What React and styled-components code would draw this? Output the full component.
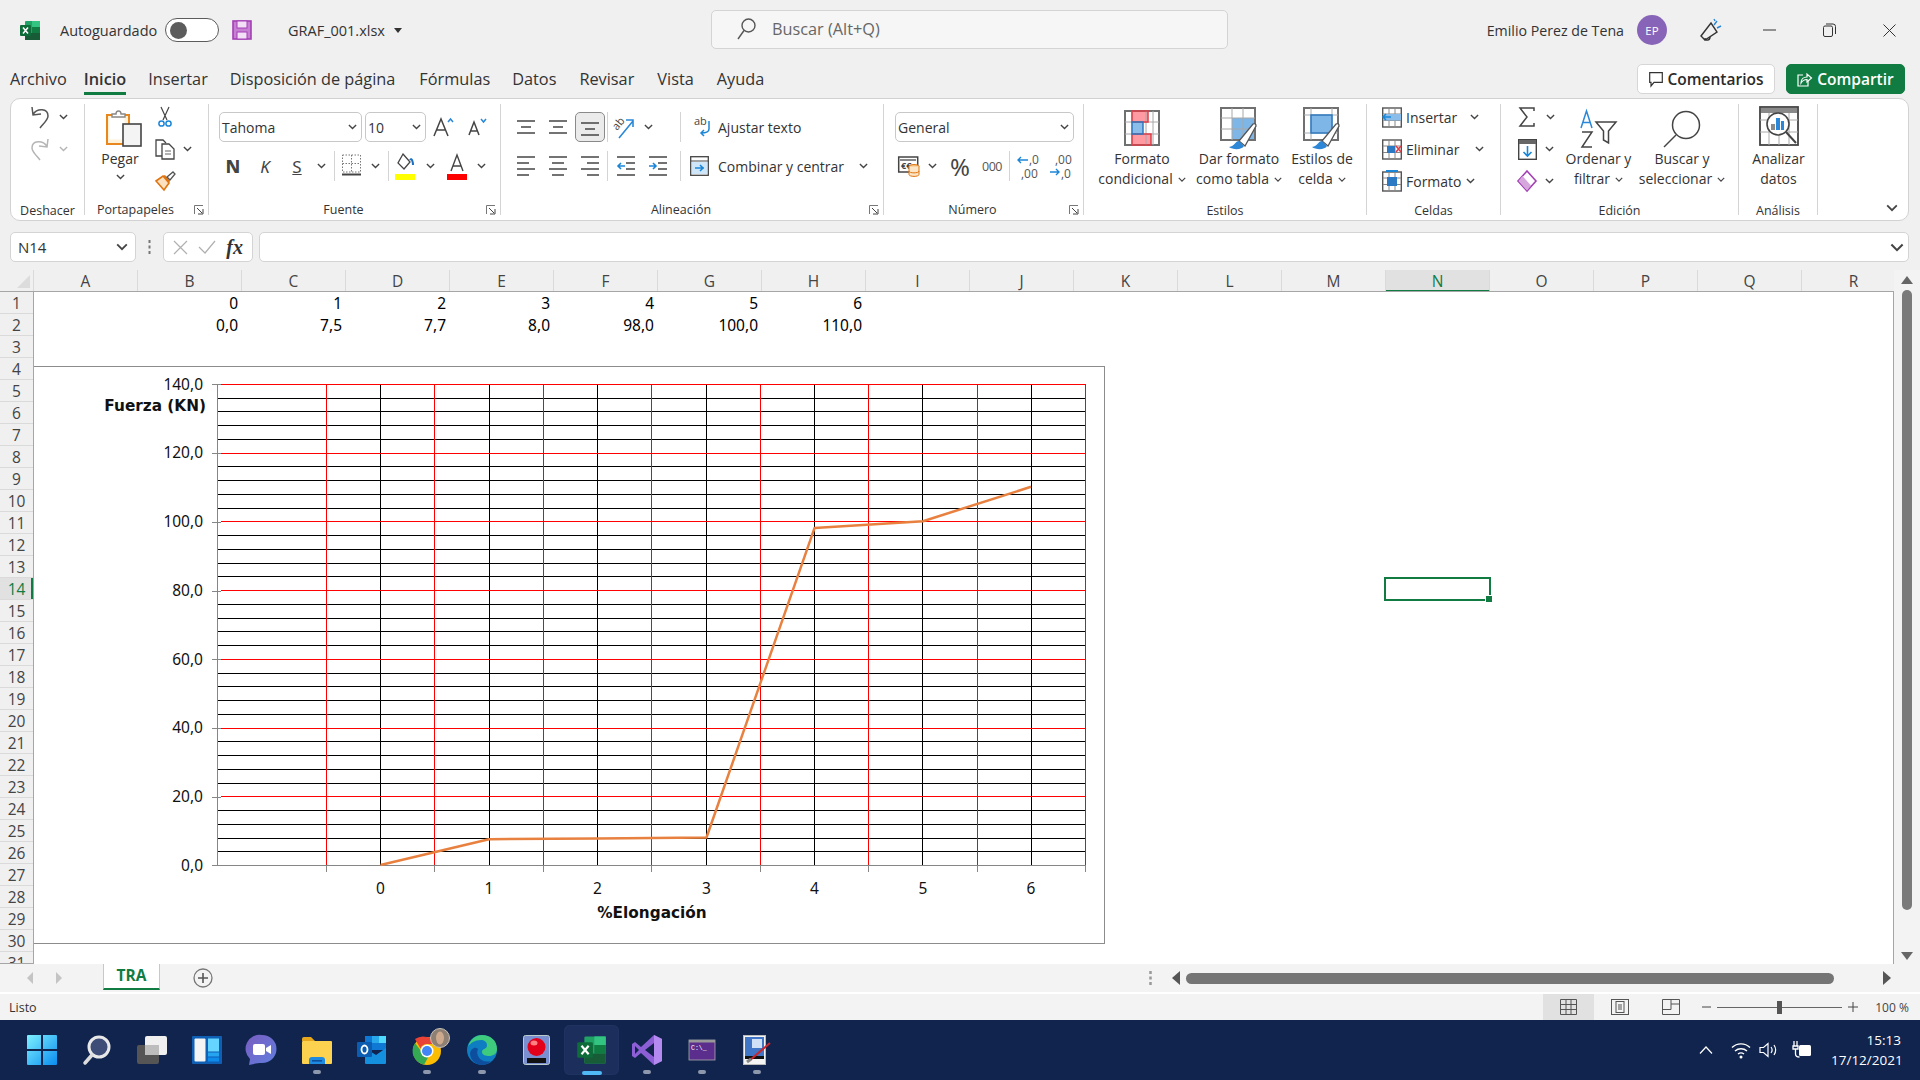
import React from "react";
import styled, { createGlobalStyle } from "styled-components";

const Global = createGlobalStyle`
  html, body { margin: 0; padding: 0; background: #f0f0f0; }
  * { box-sizing: border-box; }
`;
const UI = `"Open Sans", "Noto Sans", sans-serif`;
const Page = styled.div`
  width: 1920px; height: 1080px; overflow: hidden; background: #f0f0f0;
  display: flex; flex-direction: column; font-family: ${UI}; color: #2b2b2b; font-size: 14px;
`;
const Svg = styled.svg`display: block; flex: none; overflow: visible;`;

/* ---------- title bar ---------- */
const TitleBar = styled.header`height: 60px; flex: none; display: grid; grid-template-columns: 711px 517px 1fr; align-items: center;`;
const TitleLeft = styled.div`display: flex; align-items: center; padding-left: 20px;`;
const AutoLabel = styled.span`margin-left: 20px; width: 97px; font-size: 14.5px; white-space: nowrap; color: #333;`;
const Toggle = styled.span`
  margin-left: 8px; width: 54px; height: 24px; border: 1px solid #5c5c5c; border-radius: 12px; background: #fff;
  display: flex; align-items: center; padding-left: 4px;
  &::before { content: ""; width: 17px; height: 17px; border-radius: 50%; background: #5c5c5c; }
`;
const SaveWrap = styled.span`margin-left: 13px;`;
const FileName = styled.span`margin-left: 36px; font-size: 14.5px; white-space: nowrap; color: #333;`;
const Caret = styled.span`margin-left: 9px; border: 4px solid transparent; border-top: 5px solid #333; border-bottom: 0;`;
const SearchBox = styled.div`
  height: 39px; margin-top: -1px; background: #f6f6f6; border: 1px solid #d4d4d4; border-radius: 5px;
  display: flex; align-items: center; padding: 0 0 2px 25px; gap: 16px; color: #666; font-size: 16.3px;
`;
const TitleRight = styled.div`display: flex; align-items: center; justify-content: flex-end; padding-right: 1px;`;
const UserName = styled.span`font-size: 14.2px; color: #333; white-space: nowrap;`;
const Avatar = styled.span`
  margin-left: 13px; width: 30px; height: 30px; border-radius: 50%; background: #8764b8; color: #fff;
  display: flex; align-items: center; justify-content: center; font-size: 11.5px;
`;
const Feedback = styled.span`margin: 0 17px 0 33px;`;
const WinBtn = styled.span`width: 60px; display: flex; justify-content: center;`;

/* ---------- tabs ---------- */
const TabsRow = styled.nav`height: 38px; flex: none; display: flex; align-items: flex-start; padding: 4px 15px 0 0; position: relative;`;
const Tab = styled.span`
  margin-left: ${p => p.$ml}px; height: 30px; line-height: 30px; font-size: 16.3px; white-space: nowrap; color: #333; position: relative;
  font-weight: ${p => p.$on ? 600 : 400};
  ${p => p.$on && `&::after { content: ""; position: absolute; left: 0; right: 0; bottom: -1px; height: 3px; background: #107c41; }`}
`;
const TabSpacer = styled.span`flex: 1;`;
const CommentBtn = styled.span`
  width: 138px; height: 30px; background: #fff; border: 1px solid #d6d6d6; border-radius: 5px; font-weight: 600; font-size: 15.5px;
  display: flex; align-items: center; justify-content: center; gap: 5px; white-space: nowrap;
`;
const ShareBtn = styled(CommentBtn)`width: 119px; margin-left: 11px; background: #107c41; border-color: #107c41; color: #fff;`;

/* ---------- ribbon ---------- */
const Ribbon = styled.section`
  margin: 0 11px 0 10px; height: 123px; flex: none; background: #fff; border: 1px solid #d2d2d2; border-radius: 10px;
  padding-top: 5px; display: flex; position: relative;
`;
const Group = styled.div`
  width: ${p => p.$w}px; flex: none; height: 111px; display: flex; flex-direction: column;
  border-right: 1px solid #d4d4d4; position: relative;
`;
const Body = styled.div`
  height: 96px; flex: none; display: flex; flex-direction: ${p => p.$col ? "column" : "row"};
  padding: ${p => p.$pt || 0}px 0 0 ${p => p.$pl || 0}px;
`;
const GroupLabel = styled.div`
  height: 15px; line-height: ${p => p.$launch ? 20 : 21}px; text-align: center; font-size: 12.5px; color: #333; white-space: nowrap;
  padding-right: ${p => p.$launch ? 22 : 0}px;
`;
const Launcher = styled.span`position: absolute; right: 4px; bottom: 0;`;
const Stack = styled.div`display: flex; flex-direction: column; gap: 6px;`;
const Row = styled.div`display: flex; align-items: center; height: ${p => p.$h || 26}px; margin-top: ${p => p.$mt || 0}px;`;
const Slot = styled.span`
  width: ${p => p.$w}px; flex: none; display: flex; align-items: center; justify-content: center;
  height: ${p => p.$h ? p.$h + "px" : "auto"};
  margin-left: ${p => p.$ml || 0}px;
`;
const Pressed = styled(Slot)`height: 30px; background: #ebebeb; border: 1px solid #8a8a8a; border-radius: 5px;`;
const VSep = styled.span`width: 1px; height: 30px; background: #d4d4d4; flex: none; margin-left: ${p => p.$ml || 0}px;`;
const RowText = styled.span`width: ${p => p.$w}px; margin-left: ${p => p.$ml || 0}px; flex: none; font-size: 14px; white-space: nowrap; color: #333;`;
const Big = styled.div`width: ${p => p.$w}px; flex: none; display: flex; flex-direction: column; align-items: center; padding-top: 4px;`;
const BigIcon = styled.div`
  height: ${p => p.$h || 41}px; display: flex; align-items: center; justify-content: center;
  margin: ${p => p.$up ? -p.$up : 0}px 0 ${p => p.$up || 0}px ${p => p.$shift || 0}px;
`;
const BigLine = styled.div`height: 20px; line-height: 20px; font-size: 14px; white-space: nowrap; display: flex; align-items: center; gap: 5px; color: #333; margin-top: ${p => p.$mt || 0}px;`;
const Select = styled.div`
  width: ${p => p.$w}px; height: 30px; margin-left: ${p => p.$ml || 0}px; flex: none; background: #fff; border: 1px solid #c8c8c8; border-radius: 5px;
  display: flex; align-items: center; justify-content: space-between; padding: 0 4px 0 2px; font-size: 14px; color: #333;
`;
const Letter = styled.span`font-family: "Noto Sans", sans-serif; font-size: ${p => p.$s || 16}px; font-weight: ${p => p.$b ? 800 : 400}; font-style: ${p => p.$i ? "italic" : "normal"}; text-decoration: ${p => p.$u ? "underline" : "none"}; color: #444;`;
const TinyNum = styled.span`font-size: 12.5px; color: #555; letter-spacing: -0.5px;`;
const CollapseBtn = styled.span`position: absolute; right: 10px; bottom: 9px;`;

/* ---------- formula bar ---------- */
const FormulaRow = styled.div`height: 30px; margin: 11px 0 8px; flex: none; display: flex; padding: 0 11px 0 10px;`;
const FieldBox = styled.div`background: #fff; border: 1px solid #d4d4d4; border-radius: 5px; display: flex; align-items: center;`;
const NameBox = styled(FieldBox)`width: 126px; justify-content: space-between; padding: 0 7px; font-size: 15px; color: #333;`;
const Dots = styled.span`width: 27px; display: flex; align-items: center; justify-content: center;`;
const FxBox = styled(FieldBox)`width: 90px; justify-content: space-around; padding: 0 4px;`;
const Fx = styled.span`font-family: "Liberation Serif", serif; font-style: italic; font-weight: 700; font-size: 20px; color: #333;`;
const FormulaInput = styled(FieldBox)`flex: 1; margin-left: 6px; justify-content: flex-end; padding-right: 4px;`;

/* ---------- sheet ---------- */
const SheetRow = styled.div`height: 694px; flex: none; display: flex;`;
const SheetMain = styled.div`width: 1894px; display: flex; flex-direction: column;`;
const ColHeads = styled.div`height: 22px; flex: none; display: flex; border-bottom: 1px solid #a6a6a6; overflow: hidden;`;
const Corner = styled.div`width: 34px; flex: none; display: flex; align-items: flex-end; justify-content: flex-end; padding: 0 3px 3px 0; border-right: 1px solid #dadada;`;
const ColHead = styled.div`
  width: 104px; flex: none; text-align: center; line-height: 22px; font-size: 15.5px; color: ${p => p.$on ? "#107c41" : "#444"};
  border-right: 1px solid #dadada; height: 22px;
  background: ${p => p.$on ? "#e1e1e1" : "transparent"}; ${p => p.$on && "border-bottom: 2px solid #107c41;"}
`;
const SheetBody = styled.div`height: 672px; display: flex;`;
const RowHeads = styled.div`width: 34px; flex: none; overflow: hidden; border-right: 1px solid #a6a6a6;`;
const RowHead = styled.div`
  height: 22px; line-height: 22px; text-align: center; font-size: 15.5px; color: ${p => p.$on ? "#107c41" : "#444"};
  border-bottom: 1px solid #dadada; background: ${p => p.$on ? "#e1e1e1" : "transparent"};
  ${p => p.$on && "box-shadow: inset -2px 0 0 #107c41;"}
`;
const GridArea = styled.div`flex: 1; background: #fff; position: relative; overflow: hidden; border-right: 1px solid #a6a6a6;`;
const DataRow = styled.div`display: grid; grid-template-columns: repeat(18, 104px); height: 22px;`;
const Cell = styled.div`font-family: "Noto Sans", sans-serif; font-size: 15.5px; line-height: 22px; text-align: right; padding-right: 4px; color: #000;`;
const ChartFrame = styled.div`position: absolute; left: -1px; top: 74px; width: 1072px; height: 578px;`;
const Selection = styled.div`
  position: absolute; left: 1350px; top: 285px; width: 107px; height: 24px; border: 2px solid #107c41;
  &::after { content: ""; position: absolute; right: -4px; bottom: -4px; width: 6px; height: 6px; background: #107c41; border: 1px solid #fff; }
`;
const ChartText = styled.text`
  font-family: ${p => p.$b ? `"DejaVu Sans", sans-serif` : `"Noto Sans", sans-serif`};
  font-size: ${p => p.$b ? 15.3 : 15.5}px; fill: #111; font-weight: ${p => p.$b ? 700 : 400};
`;
const VScroll = styled.div`width: 26px; flex: none; background: #f3f3f3; display: flex; flex-direction: column; align-items: center; padding: 6px 0 0 0; position: relative;`;
const VThumb = styled.div`width: 10px; height: 620px; margin-top: 6px; background: #7a7a7a; border-radius: 5px;`;
const VDown = styled.span`margin-top: auto; margin-bottom: 4px;`;

/* ---------- sheet tabs ---------- */
const SheetBar = styled.div`height: 29px; flex: none; display: flex; align-items: center; background: #f3f3f3; border-top: 1px solid #a6a6a6; margin-top: -1px;`;
const SheetTab = styled.span`
  width: 57px; height: 26px; margin: -3px 0 0 41px; background: #fff; border: 1px solid #c8c8c8; border-top: 0; border-bottom: 2px solid #107c41;
  text-align: center; line-height: 22px; font-weight: 700; font-size: 15.5px; color: #107c41; flex: none;
`;
const AddSheet = styled.span`margin-left: 33px; flex: none;`;
const HScrollDots = styled.span`margin-left: 936px; flex: none;`;
const HThumb = styled.span`width: 648px; height: 11px; border-radius: 6px; background: #757575; margin-left: 6px; flex: none;`;
const Arrow = styled.span`margin-left: ${p => p.$ml}px; flex: none;`;

/* ---------- status ---------- */
const StatusBar = styled.div`height: 28px; flex: none; background: #f3f3f3; border-top: 2px solid #fff; display: flex; align-items: center; padding: 0 6px 0 9px; font-size: 12.5px; color: #333;`;
const StatusSpacer = styled.span`flex: 1;`;
const ViewBtn = styled.span`width: 51px; height: 26px; display: flex; align-items: center; justify-content: center; background: ${p => p.$on ? "#e1e1e1" : "transparent"};`;
const ZoomTrack = styled.span`width: 125px; height: 1px; margin: 0 6px 0 6px; background: #666; position: relative;
  &::after { content: ""; position: absolute; left: 60px; top: -6px; width: 5px; height: 13px; background: #555; }`;
const ZoomLabel = styled.span`width: 44px; margin-left: 12px; font-size: 12px; color: #444; text-align: center; white-space: nowrap;`;

/* ---------- taskbar ---------- */
const Taskbar = styled.footer`height: 60px; flex: none; background: #10244e; display: flex; align-items: center; padding-left: 14px; color: #fff;`;
const TaskItem = styled.span`
  width: 55px; height: 50px; flex: none; display: flex; align-items: center; justify-content: center; position: relative; border-radius: 6px;
  ${p => p.$active && "background: #1c2f5c; box-shadow: inset 0 0 0 1px #1f3363;"}
  ${p => p.$run && `&::after { content: ""; position: absolute; bottom: ${p.$active ? 0 : 1}px; left: 50%; transform: translateX(-50%); width: ${p.$active ? 20 : 8}px; height: 4px; border-radius: 2px; background: ${p.$active ? "#4fb8f5" : "#8d98ad"}; }`}
`;
const TrayWrap = styled.div`margin-left: auto; display: flex; align-items: center; padding-right: 19px;`;
const TraySlot = styled.span`width: ${p => p.$w}px; display: flex; justify-content: center;`;
const Clock = styled.div`margin-left: 10px; width: 70px; text-align: right; font-size: 13.5px; line-height: 20px; white-space: nowrap;`;

/* ---------- icons ---------- */
const Chev = ({ c = "#444", s = 9 }) => (
  <Svg width={s} height={s * 0.62} viewBox="0 0 10 6"><path d="M1 1l4 4 4-4" fill="none" stroke={c} strokeWidth="1.5" /></Svg>
);
const ExcelIcon = ({ s = 20 }) => (
  <Svg width={s} height={s + 1} viewBox="0 0 20 21">
    <rect x="5" y="1" width="15" height="19" rx="1" fill="#21a366" />
    <rect x="12" y="1" width="8" height="6" fill="#33c481" />
    <rect x="12" y="7" width="8" height="6" fill="#107c41" />
    <rect x="5" y="13" width="15" height="7" fill="#185c37" />
    <rect x="0" y="5" width="11" height="11" rx="1" fill="#0e6b3a" />
    <path d="M3 7.5l5 6M8 7.5l-5 6" stroke="#fff" strokeWidth="1.5" />
  </Svg>
);
const Undo = ({ c = "#555", flip }) => (
  <Svg width="20" height="24" viewBox="0 0 20 24" style={flip ? { transform: "scaleX(-1)" } : undefined}>
    <path d="M2 2l1 8 8-1M3 9.5C7 3 18 3 18 11c0 4-5 8-8 12" fill="none" stroke={c} strokeWidth="1.5" />
  </Svg>
);
const Clipboard = () => (
  <Svg width="36" height="38" viewBox="0 0 36 38">
    <rect x="1" y="6" width="22" height="29" fill="#fff2d9" stroke="#e8871e" strokeWidth="2" />
    <rect x="3.5" y="8.5" width="15" height="22" fill="#fff" />
    <path d="M6 8V5h4c0-4 5-4 5 0h4v3z" fill="#fff" stroke="#888" strokeWidth="1.4" />
    <rect x="17" y="15" width="18" height="22" fill="#f4f4f4" stroke="#444" strokeWidth="1.6" />
  </Svg>
);
const Scissors = () => (
  <Svg width="14" height="22" viewBox="0 0 14 22">
    <path d="M3 1l6 13M11 1L5 14" stroke="#444" strokeWidth="1.2" />
    <circle cx="3.5" cy="17.5" r="2.6" fill="none" stroke="#1b86d8" strokeWidth="1.5" />
    <circle cx="10.5" cy="17.5" r="2.6" fill="none" stroke="#1b86d8" strokeWidth="1.5" />
  </Svg>
);
const Copy = () => (
  <Svg width="20" height="21" viewBox="0 0 20 21">
    <path d="M8 17H1V1h7l3 3" fill="#fff" stroke="#444" strokeWidth="1.3" />
    <path d="M7 5h7l5 5v10H7z" fill="#fff" stroke="#444" strokeWidth="1.3" />
    <path d="M10 12h6M10 15h6" stroke="#666" />
  </Svg>
);
const Brush = () => (
  <Svg width="21" height="20" viewBox="0 0 21 20">
    <path d="M1 10l7-5 6 7-5 7z" fill="#fbe1c0" stroke="#e0740e" strokeWidth="1.6" />
    <path d="M8 5l2-1 5 6-1 2z" fill="#e0740e" />
    <path d="M12 6l6-5 2 2-5 6z" fill="#fff" stroke="#555" strokeWidth="1.3" />
  </Svg>
);
const Launch = () => (
  <Svg width="10" height="10" viewBox="0 0 10 10">
    <path d="M.5 9V.5H9" fill="none" stroke="#777" />
    <path d="M3 3l5 5M9 4v5H4" fill="none" stroke="#444" />
  </Svg>
);
const BigA = ({ up, s }) => (
  <Svg width="22" height="22" viewBox="0 0 22 22">
    <path d={s ? "M3 19L8 6l5 13M5 15h6" : "M1 20L8 3l7 17M4 14h8"} fill="none" stroke="#444" strokeWidth="1.5" />
    <path d={up ? "M15 6l2.5-3L20 6" : "M15 3l2.5 3L20 3"} fill="none" stroke="#2b88d8" strokeWidth="1.5" />
  </Svg>
);
const BorderIcon = () => (
  <Svg width="19" height="24" viewBox="0 0 19 24">
    <path d="M.5 1h18v17H.5zM9.5 1v17M.5 9.5h18" fill="none" stroke="#777" strokeWidth="1" strokeDasharray="1.5 1.5" />
    <path d="M0 20.5h19" stroke="#444" strokeWidth="2" />
  </Svg>
);
const FillIcon = () => (
  <Svg width="20" height="27" viewBox="0 0 20 27">
    <path d="M8 1l7 8-6 7-6-6z" fill="#fff" stroke="#444" strokeWidth="1.3" />
    <path d="M15 7c2-3 3 3 3 5" fill="none" stroke="#1b6fc2" strokeWidth="2" />
    <rect y="21" width="20" height="6" fill="#ffff00" />
  </Svg>
);
const ColorA = () => (
  <Svg width="20" height="27" viewBox="0 0 20 27">
    <path d="M4 18l6-16 6 16M6 13h8" fill="none" stroke="#444" strokeWidth="1.4" />
    <rect y="21" width="20" height="6" fill="#ff0000" />
  </Svg>
);
const Lines = ({ rows, w = 18, h = 20, c = "#444" }) => (
  <Svg width={w} height={h} viewBox={`0 0 ${w} ${h}`}>
    {rows.map(([a, b, y], i) => <path key={i} d={`M${a} ${y}H${b}`} stroke={c} strokeWidth="1.5" />)}
  </Svg>
);
const Orient = () => (
  <Svg width="22" height="24" viewBox="0 0 22 24">
    <text transform="translate(4 16) rotate(-50)" fontSize="11" fontFamily="Open Sans" fill="#444">ab</text>
    <path d="M6 23L20 6M13 5h7v7" fill="none" stroke="#2b88d8" strokeWidth="1.6" />
  </Svg>
);
const Indent = ({ inc }) => (
  <Svg width="18" height="22" viewBox="0 0 18 22">
    <path d="M0 2h18M9 8h9M9 14h9M0 20h18" stroke="#444" strokeWidth="1.5" />
    <path d={inc ? "M0 11h7M4 8l3 3-3 3" : "M8 11H1M4 8l-3 3 3 3"} fill="none" stroke="#1b86d8" strokeWidth="1.6" />
  </Svg>
);
const Wrap = () => (
  <Svg width="20" height="24" viewBox="-3 0 20 24">
    <text x="1" y="10" fontSize="11" fontFamily="Open Sans" fill="#444">ab</text>
    <path d="M16 6v8c0 3-3 4-8 4M11 15l-3 3 3 3" fill="none" stroke="#1b86d8" strokeWidth="1.5" />
  </Svg>
);
const Merge = () => (
  <Svg width="19" height="20" viewBox="0 0 19 20">
    <rect x=".7" y=".7" width="17.6" height="18.6" fill="#fff" stroke="#444" strokeWidth="1.3" />
    <path d="M1 5h17" stroke="#444" />
    <rect x="2" y="6" width="15" height="12" fill="#cfe6f8" />
    <path d="M5 12h9M10 9l3 3-3 3" fill="none" stroke="#1b86d8" strokeWidth="1.5" />
  </Svg>
);
const Currency = () => (
  <Svg width="22" height="24" viewBox="0 0 22 24">
    <rect x=".7" y="3" width="19" height="15" fill="#fff" stroke="#444" strokeWidth="1.5" />
    <rect x="2" y="5" width="16" height="2" fill="#888" />
    <text x="3" y="15" fontSize="9" fontWeight="700" fontFamily="Noto Sans" fill="#444">€€</text>
    <ellipse cx="16" cy="12.5" rx="5" ry="2" fill="#f7c27e" stroke="#e0740e" />
    <path d="M11 12.5v8c0 2.5 10 2.5 10 0v-8" fill="#fde6c8" stroke="#e0740e" />
    <path d="M11 17c0 2.5 10 2.5 10 0" fill="none" stroke="#e0740e" />
  </Svg>
);
const DecBtn = ({ inc }) => (
  <Svg width="20" height="26" viewBox="0 0 20 26">
    {inc ? <>
      <text x="5" y="11" fontSize="12" fontFamily="Open Sans" fill="#555">,00</text>
      <text x="11" y="25" fontSize="12" fontFamily="Open Sans" fill="#555">,0</text>
      <path d="M0 19h9M6 16l3 3-3 3" fill="none" stroke="#1b86d8" strokeWidth="1.4" />
    </> : <>
      <text x="12" y="11" fontSize="12" fontFamily="Open Sans" fill="#555">,0</text>
      <text x="4" y="25" fontSize="12" fontFamily="Open Sans" fill="#555">,00</text>
      <path d="M11 7H1M4 4L1 7l3 3" fill="none" stroke="#1b86d8" strokeWidth="1.4" />
    </>}
  </Svg>
);
const G = "#707070";
const CellGrid = ({ children, w = 36, h = 36, xs, ys }) => (
  <>
    {children}
    <rect x="1" y="1" width={w - 2} height={h - 2} fill="none" stroke={G} strokeWidth="2" />
    {xs.map(x => <path key={"x" + x} d={`M${x} 1V${h - 1}`} stroke="#a8a8a8" strokeWidth="1" />)}
    {ys.map(y => <path key={"y" + y} d={`M1 ${y}H${w - 1}`} stroke="#a8a8a8" strokeWidth="1" />)}
  </>
);
const PaintBrush = ({ x = 0, y = 0 }) => (
  <g transform={`translate(${x} ${y})`}>
    <path d="M13 14l14-17c2-1 3 0 3 2L19 19z" fill="#fff" stroke="#555" strokeWidth="1.3" />
    <path d="M13 14c-4 0-4 5-10 6 4 3 13 3 15-1z" fill="#2e86d6" />
  </g>
);
const CondIcon = () => (
  <Svg width="36" height="38" viewBox="0 0 36 38">
    <CellGrid h={36} xs={[8, 22, 29]} ys={[12, 24]}>
      <rect x="8" y="1" width="16" height="11" fill="#ff9aa2" />
      <rect x="8" y="12" width="11" height="12" fill="#8bbdea" />
      <rect x="8" y="24" width="19" height="11" fill="#ff9aa2" />
    </CellGrid>
    <rect x="8" y="1" width="16" height="11" fill="none" stroke="#e03c46" strokeWidth="1.5" />
    <rect x="8" y="24" width="19" height="11" fill="none" stroke="#e03c46" strokeWidth="1.5" />
    <rect x="8" y="12" width="11" height="12" fill="none" stroke="#2b79c2" strokeWidth="1.5" />
  </Svg>
);
const TableIcon = () => (
  <Svg width="38" height="44" viewBox="0 0 38 44">
    <CellGrid h={34} xs={[12, 23]} ys={[11, 22]}>
      <rect x="12" y="11" width="23" height="22" fill="#7fb6e8" />
    </CellGrid>
    <PaintBrush x="6" y="20" />
  </Svg>
);
const CellStyleIcon = () => (
  <Svg width="38" height="44" viewBox="0 0 38 44">
    <CellGrid h={34} xs={[8, 29]} ys={[8, 26]}>
      <rect x="8" y="8" width="21" height="18" fill="#7fb6e8" />
    </CellGrid>
    <rect x="8" y="8" width="21" height="18" fill="none" stroke="#2b79c2" strokeWidth="1.5" />
    <PaintBrush x="6" y="20" />
  </Svg>
);
const SmallCells = ({ children }) => (
  <Svg width="20" height="21" viewBox="0 0 20 21">
    <rect x=".7" y="1" width="18.6" height="19" fill="#fff" stroke="#555" strokeWidth="1.4" />
    <path d="M1 7h18M1 13.5h18M7 1v19M13 1v19" stroke="#888" />
    {children}
  </Svg>
);
const SumIcon = () => (
  <Svg width="16" height="20" viewBox="0 0 16 20"><path d="M15 4V1H1l7 9-7 9h14v-3" fill="none" stroke="#444" strokeWidth="1.5" /></Svg>
);
const FillDown = () => (
  <Svg width="19" height="21" viewBox="0 0 19 21">
    <rect x=".7" y=".7" width="17.6" height="19.6" fill="#fff" stroke="#444" strokeWidth="1.4" />
    <rect x="1" y="1" width="17" height="4" fill="#666" />
    <path d="M9.5 7v10M5.5 13l4 4 4-4" fill="none" stroke="#1b86d8" strokeWidth="1.6" />
  </Svg>
);
const Eraser = () => (
  <Svg width="20" height="22" viewBox="0 0 20 22">
    <path d="M10 1l9 10-9 10-9-10z" fill="#fff" stroke="#a33fb5" strokeWidth="1.6" />
    <path d="M5.5 6L1.5 11l8.5 9.5 4-5z" fill="#d5a7dd" />
  </Svg>
);
const SortIcon = () => (
  <Svg width="38" height="38" viewBox="0 0 38 38">
    <path d="M1 18L6.5 1 12 18M3 12.5h7" fill="none" stroke="#2b88d8" strokeWidth="1.5" />
    <path d="M2 22h10L2 37h10" fill="none" stroke="#444" strokeWidth="1.5" />
    <path d="M16 12h20l-7.5 9v12l-5-3v-9z" fill="#fff" stroke="#444" strokeWidth="1.5" />
  </Svg>
);
const FindIcon = () => (
  <Svg width="38" height="38" viewBox="0 0 38 38">
    <circle cx="23" cy="15" r="13.5" fill="#fff" stroke="#444" strokeWidth="1.5" />
    <path d="M13 25L1 37" stroke="#444" strokeWidth="1.5" />
  </Svg>
);
const AnalyzeIcon = () => (
  <Svg width="40" height="40" viewBox="0 0 40 40">
    <rect x="1" y="1" width="38" height="38" fill="#fff" stroke="#444" strokeWidth="1.8" />
    <rect x="2" y="2" width="36" height="5" fill="#8a8a8a" />
    <path d="M1 14h38M1 26h38M10 7v32M30 7v32M20 26v13" stroke="#aaa" />
    <circle cx="19" cy="18" r="11" fill="#fff" stroke="#444" strokeWidth="1.6" />
    <rect x="12" y="18" width="4" height="6" fill="#8a8a8a" />
    <rect x="17" y="12" width="4" height="12" fill="#2b88d8" />
    <rect x="22" y="15" width="3" height="9" fill="#2b88d8" />
    <path d="M27 26l10 11" stroke="#444" strokeWidth="2" />
  </Svg>
);

/* ---------- taskbar icons ---------- */
const WinLogo = () => (
  <Svg width="30" height="30" viewBox="0 0 30 30">
    <defs><linearGradient id="win" x1="0" y1="0" x2="1" y2="1"><stop offset="0" stopColor="#7ef0ff" /><stop offset="1" stopColor="#0a8df0" /></linearGradient></defs>
    <path d="M0 1a1 1 0 011-1h13v14H0zM16 0h13a1 1 0 011 1v13H16zM0 16h14v14H1a1 1 0 01-1-1zM16 16h14v13a1 1 0 01-1 1H16z" fill="url(#win)" />
  </Svg>
);
const SearchT = () => (
  <Svg width="28" height="30" viewBox="0 0 28 30">
    <circle cx="16" cy="12" r="10" fill="#3d4d78" stroke="#e8e8e8" strokeWidth="3" />
    <path d="M9 20L2 28" stroke="#ddd" strokeWidth="3.5" strokeLinecap="round" />
  </Svg>
);
const TaskView = () => (
  <Svg width="30" height="28" viewBox="0 0 30 28">
    <rect x="0" y="9" width="22" height="19" rx="2" fill="#555" />
    <rect x="8" y="0" width="22" height="19" rx="2" fill="#f0f0f0" />
    <rect x="8" y="9" width="14" height="10" fill="#bdbdbd" />
  </Svg>
);
const Widgets = () => (
  <Svg width="30" height="28" viewBox="0 0 30 28">
    <rect width="30" height="28" rx="1" fill="#0f5fb4" />
    <rect x="2.5" y="2.5" width="11" height="23" rx="1" fill="#f4f4f4" />
    <rect x="16" y="2.5" width="11" height="13" fill="#65d5ff" />
    <rect x="16" y="16.5" width="11" height="4" fill="#27a4f0" />
    <rect x="16" y="21.5" width="11" height="4" fill="#0d8aea" />
  </Svg>
);
const Teams = () => (
  <Svg width="30" height="30" viewBox="0 0 30 30">
    <defs><linearGradient id="tm" x1="0" y1="0" x2="1" y2="1"><stop offset="0" stopColor="#7a5cc0" /><stop offset="1" stopColor="#5f7fe0" /></linearGradient></defs>
    <path d="M15 0a14.5 14 0 110 28c-3 0-6 0-8 1l-5 1 1-6A14 14 0 0115 0z" fill="url(#tm)" />
    <rect x="6" y="9" width="12" height="11" rx="2" fill="#fff" />
    <path d="M19 13l5-3v9l-5-3z" fill="#fff" />
  </Svg>
);
const Folder = () => (
  <Svg width="30" height="27" viewBox="0 0 30 27">
    <path d="M0 2a2 2 0 012-2h7l4 4H0z" fill="#e8a81e" />
    <rect y="4" width="30" height="23" rx="1" fill="#fdd24f" />
    <path d="M7 23a3 3 0 013-3h10a3 3 0 013 3v4H7z" fill="#1f8be0" />
    <rect x="10" y="23" width="10" height="1.6" fill="#0c4f9c" />
  </Svg>
);
const Outlook = () => (
  <Svg width="30" height="28" viewBox="0 0 30 28">
    <rect x="8" y="0" width="21" height="14" fill="#0f78d4" />
    <rect x="15" y="0" width="7" height="7" fill="#28a8ea" />
    <rect x="22" y="0" width="7" height="7" fill="#50d9ff" />
    <path d="M8 12l11 7 10-7v15a1 1 0 01-1 1H9a1 1 0 01-1-1z" fill="#1490df" />
    <rect x="0" y="6" width="15" height="15" rx="1" fill="#0a5db0" />
    <ellipse cx="7.5" cy="13.5" rx="3" ry="4" fill="none" stroke="#fff" strokeWidth="1.8" />
  </Svg>
);
const Chrome = () => (
  <Svg width="38" height="38" viewBox="0 0 38 38" style={{ marginTop: -6, marginLeft: 8 }}>
    <circle cx="15" cy="23" r="14" fill="#fbbc04" />
    <path d="M15 9a14 14 0 0112.1 7H15a7 7 0 00-6.5 4.5L3 11a14 14 0 0112-2z" fill="#ea4335" />
    <path d="M3 15a14 14 0 009 21.7l6-10.7a7 7 0 01-9-3z" fill="#34a853" />
    <circle cx="15" cy="23" r="6.5" fill="#fff" />
    <circle cx="15" cy="23" r="5" fill="#4285f4" />
    <circle cx="28" cy="10" r="9.5" fill="#8f8074" stroke="#c9c2b8" strokeWidth="1" />
    <ellipse cx="28" cy="10" rx="4" ry="6.5" fill="#cda98d" />
  </Svg>
);
const Edge = () => (
  <Svg width="30" height="30" viewBox="0 0 30 30">
    <circle cx="15" cy="15" r="15" fill="#0f7dc2" />
    <path d="M1 12C3 4 9 0 15 0c8 0 15 5 15 14 0 5-4 7-8 7-3 0-7-1-7-4 0-4 5-2 5-7 0-3-3-5-6-5-6 0-11 3-13 7z" fill="#3ecb7e" />
    <path d="M11 14c-3 6 3 15 13 12-3 3-6 4-9 4C8 30 3 24 3 18c1-4 5-7 8-4z" fill="#0d4f9e" />
  </Svg>
);
const RedBall = () => (
  <Svg width="27" height="30" viewBox="0 0 27 30">
    <rect x=".5" y=".5" width="26" height="29" rx="2" fill="#7a8fd0" stroke="#bcc" />
    <circle cx="13.5" cy="12" r="9" fill="#e2001a" />
    <ellipse cx="11" cy="8" rx="3.5" ry="2.5" fill="#ff8080" />
    <rect x="4" y="23" width="19" height="5" fill="#111" />
  </Svg>
);
const VS = () => (
  <Svg width="30" height="30" viewBox="0 0 30 30">
    <path d="M22 0l8 4v22l-8 4-13-12-6 5-3-2V9l3-2 6 5z" fill="#8c5fd6" />
    <path d="M22 8v14l-9-7z" fill="#10244e" />
    <path d="M3 11v8l4-4z" fill="#10244e" />
    <path d="M22 0l8 4v22l-8 4z" fill="#b58af0" />
  </Svg>
);
const Cmd = () => (
  <Svg width="26" height="20" viewBox="0 0 26 20">
    <rect width="26" height="20" fill="#5b2d8c" stroke="#aaa" strokeWidth=".8" />
    <rect width="26" height="2.5" fill="#999" />
    <text x="2" y="10" fontSize="6.5" fill="#fff" fontFamily="Liberation Mono">C:\_</text>
  </Svg>
);
const PaintT = () => (
  <Svg width="28" height="30" viewBox="0 0 28 30">
    <rect x=".5" y=".5" width="22" height="29" fill="#f4f4f4" stroke="#bbb" />
    <rect x="2" y="2" width="19" height="19" fill="#3f74c6" />
    <rect x="9" y="4" width="10" height="9" fill="#cfe0f7" />
    <rect x="2" y="21" width="19" height="3" fill="#111" />
    <path d="M6 26L27 8" stroke="#c8262e" strokeWidth="2" />
    <path d="M4 27l4-3" stroke="#888" strokeWidth="3" />
  </Svg>
);

const COLS = "ABCDEFGHIJKLMNOPQR".split("");

const yVal = v => 865 - v * 3.4379;
const H_LINES = Array.from({ length: 36 }, (_, i) => i);
const RED_X = [326, 434, 543, 651, 760, 868, 977, 1085];
const BLACK_X = [380, 489, 597, 706, 814, 922, 1031];
const LABEL_X = [380.5, 489, 597.5, 706.5, 814.5, 923, 1031];
const SERIES = [0, 7.5, 7.7, 8, 98, 100, 110];

const Chart = () => (
  <Svg width="1072" height="578" viewBox="33 366 1072 578">
    <rect x="33.5" y="366.5" width="1071" height="577" fill="#fff" stroke="#8c8c8c" />
    <g shapeRendering="crispEdges">
      {H_LINES.filter(i => i % 5 !== 0).map(i => {
        const y = Math.round(865 - i * 13.75) + 0.5;
        return <path key={i} d={`M218 ${y}H1085`} stroke="#000" />;
      })}
      {BLACK_X.map(x => <path key={x} d={`M${x + 0.5} 384V865`} stroke="#000" />)}
      {RED_X.map(x => <path key={x} d={`M${x + 0.5} 384V865`} stroke="#f00" />)}
      {H_LINES.filter(i => i % 5 === 0 && i > 0).map(i => {
        const y = Math.round(865 - i * 13.75) + 0.5;
        return <path key={i} d={`M221 ${y}H1086`} stroke="#f00" />;
      })}
      <path d="M217.5 384V866M212 865.5H1086" stroke="#868686" />
      <path d="M212 384.500H221M212 453.500H221M212 522.500H221M212 591.500H221M212 659.500H221M212 728.500H221M212 797.500H221" stroke="#868686" />
      {RED_X.map(x => <path key={x} d={`M${x + 0.5} 865V872`} stroke="#868686" />)}
    </g>
    <polyline points={LABEL_X.map((x, i) => `${x},${yVal(SERIES[i]).toFixed(1)}`).join(" ")} fill="none" stroke="#e8803f" strokeWidth="2.5" strokeLinejoin="round" />
    {[0, 1, 2, 3, 4, 5, 6, 7].map(i => (
      <ChartText key={i} x="203" y={871 - i * 68.76} textAnchor="end">{(i * 20).toFixed(1).replace(".", ",")}</ChartText>
    ))}
    {LABEL_X.map((x, i) => <ChartText key={i} x={x} y="894" textAnchor="middle">{i}</ChartText>)}
    <ChartText $b x="206" y="411" textAnchor="end">Fuerza (KN)</ChartText>
    <ChartText $b x="652" y="918" textAnchor="middle">%Elongación</ChartText>
  </Svg>
);

export default function App() {
  return (
    <Page>
      <Global />
      <TitleBar>
        <TitleLeft>
          <ExcelIcon />
          <AutoLabel>Autoguardado</AutoLabel>
          <Toggle />
          <SaveWrap>
            <Svg width="20" height="20" viewBox="0 0 20 20">
              <rect x="1" y="1" width="18" height="18" fill="#c77fd3" stroke="#a33fb5" strokeWidth="1.6" />
              <rect x="5" y="1" width="10" height="7" fill="#f3dff6" stroke="#a33fb5" />
              <rect x="5" y="12" width="10" height="7" fill="#f3dff6" stroke="#a33fb5" />
            </Svg>
          </SaveWrap>
          <FileName>GRAF_001.xlsx</FileName>
          <Caret />
        </TitleLeft>
        <SearchBox>
          <Svg width="19" height="22" viewBox="0 0 19 22">
            <circle cx="11.5" cy="7.5" r="6.5" fill="none" stroke="#555" strokeWidth="1.4" />
            <path d="M7 12.5L1 21" stroke="#555" strokeWidth="1.4" />
          </Svg>
          Buscar (Alt+Q)
        </SearchBox>
        <TitleRight>
          <UserName>Emilio Perez de Tena</UserName>
          <Avatar>EP</Avatar>
          <Feedback>
            <Svg width="22" height="24" viewBox="0 0 22 24">
              <path d="M1 18L11 5l6 9L5 22z" fill="none" stroke="#333" strokeWidth="1.4" />
              <path d="M5 20c0 3 5 3 5-1" fill="none" stroke="#333" strokeWidth="1.4" />
              <path d="M14 7l3-4M17 10l4-2M14 1l1 2" stroke="#2b88d8" strokeWidth="1.4" />
            </Svg>
          </Feedback>
          <WinBtn><Svg width="13" height="2" viewBox="0 0 13 2"><path d="M0 1h13" stroke="#333" /></Svg></WinBtn>
          <WinBtn>
            <Svg width="13" height="14" viewBox="0 0 13 14">
              <rect x=".5" y="3" width="9" height="10.5" rx="1.5" fill="none" stroke="#333" />
              <path d="M3 1h7a2.5 2.5 0 012.5 2.5V11" fill="none" stroke="#333" />
            </Svg>
          </WinBtn>
          <WinBtn><Svg width="13" height="13" viewBox="0 0 13 13"><path d="M.5.5l12 12M12.5.5l-12 12" stroke="#333" /></Svg></WinBtn>
        </TitleRight>
      </TitleBar>

      <TabsRow>
        <Tab $ml={10}>Archivo</Tab>
        <Tab $ml={17} $on>Inicio</Tab>
        <Tab $ml={22}>Insertar</Tab>
        <Tab $ml={22}>Disposición de página</Tab>
        <Tab $ml={24}>Fórmulas</Tab>
        <Tab $ml={22}>Datos</Tab>
        <Tab $ml={23}>Revisar</Tab>
        <Tab $ml={23}>Vista</Tab>
        <Tab $ml={23}>Ayuda</Tab>
        <TabSpacer />
        <CommentBtn>
          <Svg width="14" height="15" viewBox="0 0 14 15"><path d="M.7.7h12.6v9.6H5L2 14v-3.7H.7z" fill="none" stroke="#333" strokeWidth="1.2" /></Svg>
          Comentarios
        </CommentBtn>
        <ShareBtn>
          <Svg width="15" height="15" viewBox="0 0 15 15">
            <path d="M6 3H1v11h10V9" fill="none" stroke="#fff" strokeWidth="1.2" />
            <path d="M4 11c0-4 3-6 6-6V2l4.500 4L10 10V7.500C8 7.500 5.500 8.500 4 11z" fill="none" stroke="#fff" strokeWidth="1.2" />
          </Svg>
          Compartir
        </ShareBtn>
      </TabsRow>

      <Ribbon>
        <Group $w={74}>
          <Body $col $pl={16}>
            <Stack>
              <Row><Slot $w={26}><Undo /></Slot><Slot $w={20}><Chev /></Slot></Row>
              <Row><Slot $w={26}><Undo c="#b5b5b5" flip /></Slot><Slot $w={20}><Chev c="#b5b5b5" /></Slot></Row>
            </Stack>
          </Body>
          <GroupLabel>Deshacer</GroupLabel>
        </Group>

        <Group $w={124}>
          <Body>
            <Big $w={70}>
              <BigIcon $h={39} $shift={8}><Clipboard /></BigIcon>
              <BigLine $mt={2}>Pegar</BigLine>
              <Slot $w={20} $h={16}><Chev /></Slot>
            </Big>
            <Stack>
              <Row><Slot $w={20}><Scissors /></Slot></Row>
              <Row><Slot $w={20}><Copy /></Slot><Slot $w={24}><Chev /></Slot></Row>
              <Row><Slot $w={20}><Brush /></Slot></Row>
            </Stack>
          </Body>
          <GroupLabel $launch>Portapapeles</GroupLabel>
          <Launcher><Launch /></Launcher>
        </Group>

        <Group $w={292}>
          <Body $col $pl={10} $pt={8}>
            <Row $h={30}>
              <Select $w={143}>Tahoma<Chev /></Select>
              <Select $w={61} $ml={3}>10<Chev /></Select>
              <Slot $w={22} $ml={7}><BigA up /></Slot>
              <Slot $w={22} $ml={11}><BigA s /></Slot>
            </Row>
            <Row $h={30} $mt={9}>
              <Slot $w={28}><Letter $b $s={18}>N</Letter></Slot>
              <Slot $w={36}><Letter $i $s={17}>K</Letter></Slot>
              <Slot $w={28}><Letter $u $s={17}>S</Letter></Slot>
              <Slot $w={20}><Chev /></Slot>
              <VSep $ml={3} />
              <Slot $w={32}><BorderIcon /></Slot>
              <Slot $w={16}><Chev /></Slot>
              <VSep $ml={5} />
              <Slot $w={32}><FillIcon /></Slot>
              <Slot $w={18}><Chev /></Slot>
              <Slot $w={36}><ColorA /></Slot>
              <Slot $w={12}><Chev /></Slot>
            </Row>
          </Body>
          <GroupLabel $launch>Fuente</GroupLabel>
          <Launcher><Launch /></Launcher>
        </Group>

        <Group $w={383}>
          <Body $col $pl={9} $pt={8}>
            <Row $h={30}>
              <Slot $w={32}><Lines rows={[[0, 18, 2], [4, 14, 8], [0, 18, 14]]} h={16} /></Slot>
              <Slot $w={32}><Lines rows={[[0, 18, 3], [4, 14, 9], [0, 18, 15]]} h={18} /></Slot>
              <Pressed $w={30} $ml={1}><Lines rows={[[0, 18, 6], [4, 14, 12], [0, 18, 18]]} /></Pressed>
              <VSep $ml={2} />
              <Slot $w={32}><Orient /></Slot>
              <Slot $w={16}><Chev /></Slot>
              <VSep $ml={24} />
              <Slot $w={37}><Wrap /></Slot>
              <RowText $w={120}>Ajustar texto</RowText>
            </Row>
            <Row $h={30} $mt={9}>
              <Slot $w={32}><Lines rows={[[0, 18, 2], [0, 12, 8], [0, 18, 14], [0, 12, 20]]} h={22} /></Slot>
              <Slot $w={32}><Lines rows={[[0, 18, 2], [3, 15, 8], [0, 18, 14], [3, 15, 20]]} h={22} /></Slot>
              <Slot $w={32}><Lines rows={[[0, 18, 2], [6, 18, 8], [0, 18, 14], [6, 18, 20]]} h={22} /></Slot>
              <VSep $ml={1} />
              <Slot $w={36}><Indent /></Slot>
              <Slot $w={28}><Indent inc /></Slot>
              <VSep $ml={8} />
              <Slot $w={37}><Merge /></Slot>
              <RowText $w={132}>Combinar y centrar</RowText>
              <Slot $w={26}><Chev /></Slot>
            </Row>
          </Body>
          <GroupLabel $launch>Alineación</GroupLabel>
          <Launcher><Launch /></Launcher>
        </Group>

        <Group $w={200}>
          <Body $col $pl={11} $pt={8}>
            <Row $h={30}><Select $w={179}>General<Chev /></Select></Row>
            <Row $h={30} $mt={9}>
              <Slot $w={28}><Currency /></Slot>
              <Slot $w={18}><Chev /></Slot>
              <Slot $w={38}><Letter $s={24}>%</Letter></Slot>
              <Slot $w={26}><TinyNum>000</TinyNum></Slot>
              <VSep $ml={4} />
              <Slot $w={34}><DecBtn /></Slot>
              <Slot $w={32}><DecBtn inc /></Slot>
            </Row>
          </Body>
          <GroupLabel $launch>Número</GroupLabel>
          <Launcher><Launch /></Launcher>
        </Group>

        <Group $w={283}>
          <Body>
            <Big $w={116}>
              <BigIcon><CondIcon /></BigIcon>
              <BigLine>Formato</BigLine>
              <BigLine>condicional <Chev s={8} /></BigLine>
            </Big>
            <Big $w={78}>
              <BigIcon><TableIcon /></BigIcon>
              <BigLine>Dar formato</BigLine>
              <BigLine>como tabla <Chev s={8} /></BigLine>
            </Big>
            <Big $w={88}>
              <BigIcon><CellStyleIcon /></BigIcon>
              <BigLine>Estilos de</BigLine>
              <BigLine>celda <Chev s={8} /></BigLine>
            </Big>
          </Body>
          <GroupLabel>Estilos</GroupLabel>
        </Group>

        <Group $w={134}>
          <Body $col $pl={15}>
            <Stack>
              <Row>
                <SmallCells><rect x="1" y="7" width="18" height="6.5" fill="#8bbdea" /><path d="M9 10H1M4 7l-3 3 3 3" fill="none" stroke="#1b86d8" strokeWidth="1.5" /></SmallCells>
                <RowText $w={60} $ml={4}>Insertar</RowText><Slot $w={16}><Chev /></Slot>
              </Row>
              <Row>
                <SmallCells><rect x="5" y="7" width="8" height="7" fill="#2b79c2" /><path d="M14 7l5 6M19 7l-5 6" stroke="#e03c46" strokeWidth="1.5" /></SmallCells>
                <RowText $w={65} $ml={4}>Eliminar</RowText><Slot $w={16}><Chev /></Slot>
              </Row>
              <Row>
                <SmallCells><rect x="5" y="6" width="10" height="9" fill="#2b79c2" /><path d="M4 0h12" stroke="#1b86d8" strokeWidth="2" /></SmallCells>
                <RowText $w={56} $ml={4}>Formato</RowText><Slot $w={16}><Chev /></Slot>
              </Row>
            </Stack>
          </Body>
          <GroupLabel>Celdas</GroupLabel>
        </Group>

        <Group $w={238}>
          <Body $pl={14}>
            <Stack>
              <Row><Slot $w={24}><SumIcon /></Slot><Slot $w={22}><Chev /></Slot></Row>
              <Row><Slot $w={24}><FillDown /></Slot><Slot $w={20}><Chev /></Slot></Row>
              <Row><Slot $w={24}><Eraser /></Slot><Slot $w={20}><Chev /></Slot></Row>
            </Stack>
            <Big $w={75}>
              <BigIcon><SortIcon /></BigIcon>
              <BigLine>Ordenar y</BigLine>
              <BigLine>filtrar <Chev s={8} /></BigLine>
            </Big>
            <Big $w={92}>
              <BigIcon><FindIcon /></BigIcon>
              <BigLine>Buscar y</BigLine>
              <BigLine>seleccionar <Chev s={8} /></BigLine>
            </Big>
          </Body>
          <GroupLabel>Edición</GroupLabel>
        </Group>

        <Group $w={79}>
          <Body>
            <Big $w={79}>
              <BigIcon $up={3}><AnalyzeIcon /></BigIcon>
              <BigLine>Analizar</BigLine>
              <BigLine>datos</BigLine>
            </Big>
          </Body>
          <GroupLabel>Análisis</GroupLabel>
        </Group>
        <CollapseBtn><Chev s={12} /></CollapseBtn>
      </Ribbon>

      <FormulaRow>
        <NameBox>N14<Chev s={12} /></NameBox>
        <Dots><Svg width="3" height="14" viewBox="0 0 3 14"><path d="M1.500 0v3M1.500 5.500v3M1.500 11v3" stroke="#777" strokeWidth="2" /></Svg></Dots>
        <FxBox>
          <Svg width="15" height="15" viewBox="0 0 15 15"><path d="M1 1l13 13M14 1L1 14" stroke="#b0b0b0" strokeWidth="1.2" /></Svg>
          <Svg width="18" height="14" viewBox="0 0 18 14"><path d="M1 7l6 6L17 1" fill="none" stroke="#b0b0b0" strokeWidth="1.2" /></Svg>
          <Fx>fx</Fx>
        </FxBox>
        <FormulaInput><Chev s={14} /></FormulaInput>
      </FormulaRow>

      <SheetRow>
        <SheetMain>
          <ColHeads>
            <Corner><Svg width="13" height="13" viewBox="0 0 13 13"><path d="M13 0v13H0z" fill="#dcdcdc" /></Svg></Corner>
            {COLS.map(c => <ColHead key={c} $on={c === "N"}>{c}</ColHead>)}
          </ColHeads>
          <SheetBody>
            <RowHeads>
              {Array.from({ length: 31 }, (_, i) => <RowHead key={i} $on={i === 13}>{i + 1}</RowHead>)}
            </RowHeads>
            <GridArea>
              <DataRow>
                <Cell />
                {["0", "1", "2", "3", "4", "5", "6"].map(v => <Cell key={v}>{v}</Cell>)}
              </DataRow>
              <DataRow>
                <Cell />
                {["0,0", "7,5", "7,7", "8,0", "98,0", "100,0", "110,0"].map(v => <Cell key={v}>{v}</Cell>)}
              </DataRow>
              <ChartFrame><Chart /></ChartFrame>
              <Selection />
            </GridArea>
          </SheetBody>
        </SheetMain>
        <VScroll>
          <Svg width="12" height="8" viewBox="0 0 12 8"><path d="M6 0l6 8H0z" fill="#666" /></Svg>
          <VThumb />
          <VDown><Svg width="12" height="8" viewBox="0 0 12 8"><path d="M6 8L0 0h12z" fill="#666" /></Svg></VDown>
        </VScroll>
      </SheetRow>

      <SheetBar>
        <Arrow $ml={27}><Svg width="6" height="12" viewBox="0 0 6 12"><path d="M6 0v12L0 6z" fill="#c4c4c4" /></Svg></Arrow>
        <Arrow $ml={23}><Svg width="6" height="12" viewBox="0 0 6 12"><path d="M0 0v12l6-6z" fill="#c4c4c4" /></Svg></Arrow>
        <SheetTab>TRA</SheetTab>
        <AddSheet>
          <Svg width="20" height="20" viewBox="0 0 20 20"><circle cx="10" cy="10" r="9" fill="none" stroke="#777" strokeWidth="1.3" /><path d="M10 5v10M5 10h10" stroke="#555" strokeWidth="1.6" /></Svg>
        </AddSheet>
        <HScrollDots><Svg width="3" height="14" viewBox="0 0 3 14"><path d="M1.500 0v3M1.500 5.500v3M1.500 11v3" stroke="#999" strokeWidth="2.500" /></Svg></HScrollDots>
        <Arrow $ml={20}><Svg width="8" height="14" viewBox="0 0 8 14"><path d="M8 0v14L0 7z" fill="#555" /></Svg></Arrow>
        <HThumb />
        <Arrow $ml={49}><Svg width="8" height="14" viewBox="0 0 8 14"><path d="M0 0v14l8-7z" fill="#555" /></Svg></Arrow>
      </SheetBar>

      <StatusBar>
        Listo
        <StatusSpacer />
        <ViewBtn $on>
          <Svg width="17" height="16" viewBox="0 0 17 16"><path d="M.5.5h16v15H.5zM.5 5.500h16M.5 10.500h16M6 .5v15M11 .5v15" fill="none" stroke="#555" /></Svg>
        </ViewBtn>
        <ViewBtn>
          <Svg width="18" height="16" viewBox="0 0 18 16"><rect x=".5" y=".5" width="17" height="15" fill="none" stroke="#555" /><rect x="5" y="2.500" width="8" height="11" fill="none" stroke="#555" /><path d="M7 6h4M7 8h4M7 10h4" stroke="#555" /></Svg>
        </ViewBtn>
        <ViewBtn>
          <Svg width="18" height="16" viewBox="0 0 18 16"><path d="M.5.5h17v15H.5zM.5 10.500H9V.5M9 5h8.500" fill="none" stroke="#555" /></Svg>
        </ViewBtn>
        <Slot $w={10} $ml={5}><Svg width="9" height="2" viewBox="0 0 9 2"><path d="M0 1h9" stroke="#444" /></Svg></Slot>
        <ZoomTrack />
        <Svg width="10" height="10" viewBox="0 0 10 10"><path d="M0 5h10M5 0v10" stroke="#444" /></Svg>
        <ZoomLabel>100 %</ZoomLabel>
      </StatusBar>

      <Taskbar>
        <TaskItem><WinLogo /></TaskItem>
        <TaskItem><SearchT /></TaskItem>
        <TaskItem><TaskView /></TaskItem>
        <TaskItem><Widgets /></TaskItem>
        <TaskItem><Teams /></TaskItem>
        <TaskItem $run><Folder /></TaskItem>
        <TaskItem><Outlook /></TaskItem>
        <TaskItem $run><Chrome /></TaskItem>
        <TaskItem $run><Edge /></TaskItem>
        <TaskItem><RedBall /></TaskItem>
        <TaskItem $run $active><ExcelIcon s={29} /></TaskItem>
        <TaskItem $run><VS /></TaskItem>
        <TaskItem $run><Cmd /></TaskItem>
        <TaskItem $run><PaintT /></TaskItem>
        <TrayWrap>
          <TraySlot $w={42}><Svg width="14" height="8" viewBox="0 0 14 8"><path d="M1 7.500L7 1l6 6.500" fill="none" stroke="#fff" strokeWidth="1.2" /></Svg></TraySlot>
          <TraySlot $w={28}>
            <Svg width="20" height="17" viewBox="0 0 20 17">
              <path d="M1 5.500a13 13 0 0118 0M4 9a9 9 0 0112 0M7 12a5 5 0 016 0" fill="none" stroke="#fff" strokeWidth="1.4" />
              <circle cx="10" cy="15" r="1.500" fill="#fff" />
            </Svg>
          </TraySlot>
          <TraySlot $w={28}>
            <Svg width="20" height="16" viewBox="0 0 20 16">
              <path d="M1 5.500h3.500L9 1.500v13l-4.500-4H1z" fill="none" stroke="#fff" strokeWidth="1.2" />
              <path d="M12 5c1.500 2 1.500 4 0 6M15 3c2 3 2 7 0 10" fill="none" stroke="#fff" strokeWidth="1.2" />
            </Svg>
          </TraySlot>
          <TraySlot $w={38}>
            <Svg width="19" height="18" viewBox="0 0 19 18">
              <rect x="6" y="4" width="12" height="11" rx="1.500" fill="#fff" />
              <path d="M1 0v5M4 0v5M0 5h5v3H0zM2.500 8v5c0 3 2 3 4 3" fill="none" stroke="#fff" strokeWidth="1.300" />
            </Svg>
          </TraySlot>
          <Clock>15:13<br />17/12/2021</Clock>
        </TrayWrap>
      </Taskbar>
    </Page>
  );
}
